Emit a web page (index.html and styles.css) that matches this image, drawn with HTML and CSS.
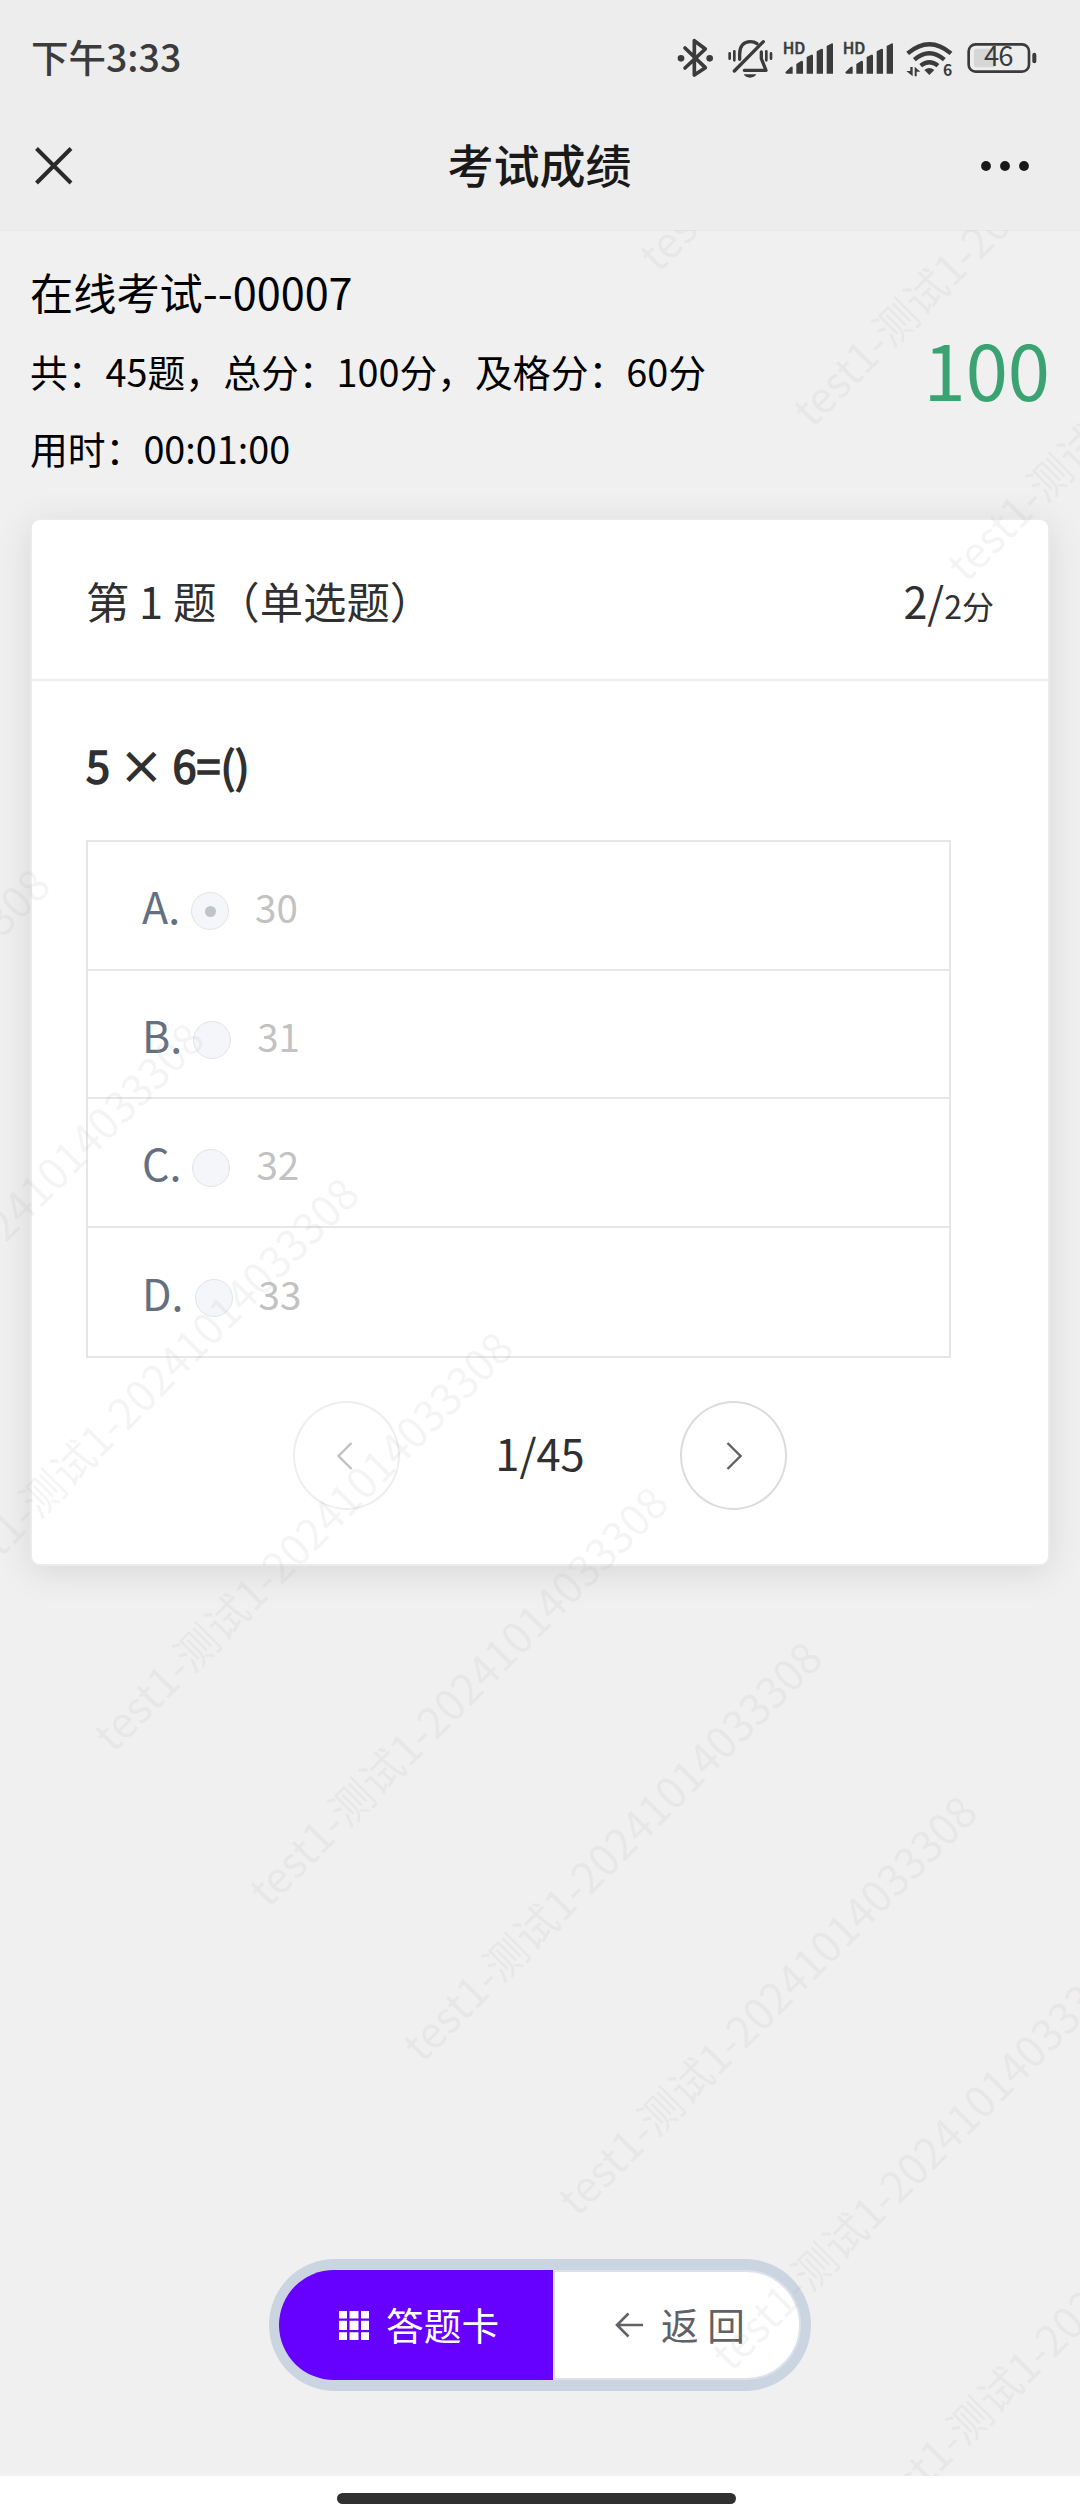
FILE: index.html
```html
<!DOCTYPE html>
<html lang="zh-CN">
<head>
<meta charset="utf-8">
<title>考试成绩</title>
<link rel="stylesheet" href="styles.css">
</head>
<body>
<div class="screen">
  <header class="top">
    <div class="status">
      <span class="time">下午3:33</span>
      <div class="status-icons">
        <svg width="40" height="45" viewBox="50 45 120 135" fill="none" stroke="#3b3b3b" stroke-width="11" stroke-linejoin="round" stroke-linecap="round">
          <path d="M74 84 L135 143 L102 165 V62 L135 87 L74 144"/>
          <circle cx="62" cy="115" r="10" fill="#3b3b3b" stroke="none"/><circle cx="148" cy="115" r="10" fill="#3b3b3b" stroke="none"/>
        </svg>
        <svg width="46.67" height="45" viewBox="200 45 140 135" fill="none" stroke="#3b3b3b" stroke-width="10" stroke-linecap="round" stroke-linejoin="round">
          <path d="M222 153 L309 65"/>
          <path d="M238 118 V102 C238 78 250 65 270 65 C278 65 285 67 290 71"/>
          <path d="M303 96 V116 L317 151 H252"/>
          <path d="M250 163 H288 Q282 173 269 173 Q256 173 250 163Z" fill="#3b3b3b" stroke="none"/>
          <path stroke-width="8" d="M208 100V116 M222 94V121 M318 94V121 M332 100V116"/>
        </svg>
        <svg class="signal" width="50" height="45" viewBox="371 45 150 135">
          <text x="370" y="101">HD</text>
          <path d="M378 157 L394 141 Q400 137 400 143 V161 H382 Q378 161 378 157Z M411 132 L425 123 Q431 120 431 127 V161 H411Z M442 111 L456 104 Q461 102 461 108 V161 H442Z M472 94 L485 87 Q491 84 491 90 V161 H472Z M502 78 L515 71 Q521 68 521 74 V161 H502Z"/>
        </svg>
        <svg class="signal" width="50" height="45" viewBox="371 45 150 135">
          <text x="370" y="101">HD</text>
          <path d="M378 157 L394 141 Q400 137 400 143 V161 H382 Q378 161 378 157Z M411 132 L425 123 Q431 120 431 127 V161 H411Z M442 111 L456 104 Q461 102 461 108 V161 H442Z M472 94 L485 87 Q491 84 491 90 V161 H472Z M502 78 L515 71 Q521 68 521 74 V161 H502Z"/>
        </svg>
        <svg class="wifi" width="53" height="45" viewBox="731 45 159 135">
          <path fill="none" stroke="#3b3b3b" stroke-width="13" d="M745 100 Q810 45 875 100 M765 119 Q810 80 855 119 M784 137 Q810 116 836 137"/>
          <path d="M795 150 Q810 138 825 150 L810 165Z"/>
          <path d="M753 141 h7 v28 L741 153 h12Z M766 169 h6 V155 h11 L766 140Z"/>
          <text x="851" y="168">6</text>
        </svg>
        <svg class="battery" width="71.67" height="45" viewBox="920 45 215 135">
          <rect x="928" y="73" width="181" height="82" rx="21" fill="none" stroke="#3b3b3b" stroke-width="8"/>
          <rect x="944" y="86" width="64" height="56" rx="8" fill="#d6d6d6"/>
          <rect x="1119" y="98" width="12" height="32" rx="6" fill="#3b3b3b"/>
          <text x="974" y="138">46</text>
        </svg>
      </div>
    </div>
    <nav class="nav">
      <svg class="close" width="38" height="38" viewBox="0 0 38 38"><path d="M1.5 1.5 L36 36 M36 1.5 L1.5 36"/></svg>
      <h1 class="nav-title">考试成绩</h1>
      <svg class="more" width="50" height="12" viewBox="0 0 50 12"><circle cx="6" cy="6" r="4.9"/><circle cx="25" cy="6" r="4.9"/><circle cx="44" cy="6" r="4.9"/></svg>
    </nav>
  </header>

  <main class="content">
    <section class="summary">
      <div class="facts">
        <div class="exam-name">在线考试--00007</div>
        <div class="fact">共：45题，总分：100分，及格分：60分</div>
        <div class="fact">用时：00:01:00</div>
      </div>
      <div class="score">100</div>
    </section>

    <section class="card">
      <div class="card-head">
        <span>第 1 题（单选题）</span>
        <span class="points">2/<small>2分</small></span>
      </div>
      <div class="card-body">
        <div class="question">5 × 6=()</div>
        <ul class="options">
          <li><span class="letter">A.</span><i class="radio checked"></i><span class="value">30</span></li>
          <li><span class="letter">B.</span><i class="radio"></i><span class="value">31</span></li>
          <li><span class="letter">C.</span><i class="radio"></i><span class="value">32</span></li>
          <li><span class="letter">D.</span><i class="radio"></i><span class="value">33</span></li>
        </ul>
        <div class="pager">
          <button class="round disabled" aria-label="上一题"><svg width="18" height="30" viewBox="0 0 18 30"><path d="M15.5 2 L2.5 15 L15.5 28"/></svg></button>
          <span class="page">1/45</span>
          <button class="round" aria-label="下一题"><svg width="18" height="30" viewBox="0 0 18 30"><path d="M2.5 2 L15.5 15 L2.5 28"/></svg></button>
        </div>
      </div>
    </section>

    <div class="actions">
      <button class="btn primary">
        <svg width="30" height="29" viewBox="0 0 30 29"><path d="M0 0h8v7.5H0z M10.5 0h9v7.5h-9z M22 0h8v7.5h-8z M0 9.8h8v9.2H0z M10.5 9.8h9v9.2h-9z M22 9.8h8v9.2h-8z M0 21.3h8V29H0z M10.5 21.3h9V29h-9z M22 21.3h8V29h-8z"/></svg>
        <span>答题卡</span>
      </button>
      <button class="btn back">
        <svg width="29" height="26" viewBox="0 0 29 26"><path d="M28 13 H2 M13.5 1.5 L2 13 L13.5 24.5"/></svg>
        <span>返 回</span>
      </button>
    </div>

    <svg class="watermark" width="1080" height="2246" viewBox="0 230 1080 2246" aria-hidden="true">
      <text transform="translate(658 274) rotate(-45)">test1-测试1-20241014033308</text>
      <text transform="translate(812 429) rotate(-45)">test1-测试1-20241014033308</text>
      <text transform="translate(966 584) rotate(-45)">test1-测试1-20241014033308</text>
      <text transform="translate(-350 1291) rotate(-45)">test1-测试1-20241014033308</text>
      <text transform="translate(-196 1445) rotate(-45)">test1-测试1-20241014033308</text>
      <text transform="translate(-41 1600) rotate(-45)">test1-测试1-20241014033308</text>
      <text transform="translate(113 1754) rotate(-45)">test1-测试1-20241014033308</text>
      <text transform="translate(268 1909) rotate(-45)">test1-测试1-20241014033308</text>
      <text transform="translate(422 2064) rotate(-45)">test1-测试1-20241014033308</text>
      <text transform="translate(577 2218) rotate(-45)">test1-测试1-20241014033308</text>
      <text transform="translate(731 2373) rotate(-45)">test1-测试1-20241014033308</text>
      <text transform="translate(886 2527) rotate(-45)">test1-测试1-20241014033308</text>
    </svg>
  </main>
  <footer class="home"><div class="home-bar"></div></footer>
</div>
</body>
</html>
```

FILE: styles.css
```css
* { box-sizing: border-box; }
body {
  margin: 0;
  font-family: "Noto Sans CJK SC", "Noto Sans", sans-serif;
  color: #303030;
  background: #fff;
}
button { font: inherit; padding: 0; margin: 0; cursor: pointer; }
svg { display: block; flex: none; }
.screen {
  width: 1080px;
  height: 2520px;
  display: flex;
  flex-direction: column;
  overflow: hidden;
}

/* Status bar and navigation */
.top { height: 230px; background: #ededed; }
.status {
  height: 101px;
  padding: 14px 42px 0 31px;
  display: flex;
  align-items: center;
  justify-content: space-between;
}
.time { font-size: 37.5px; font-weight: 500; color: #3b3b3b; line-height: 1; padding-bottom: 3px; }
.status-icons { display: flex; gap: 10px; }
.signal, .wifi { fill: #3b3b3b; }
.signal text { font: 500 47px "Noto Sans CJK SC", sans-serif; stroke: #3b3b3b; stroke-width: 1.5; }
.wifi text { font: 700 47px "Noto Sans CJK SC", sans-serif; }
.battery text { font: 400 82px "Noto Sans CJK SC", sans-serif; fill: #3b3b3b; letter-spacing: -3px; }
.nav {
  height: 129px;
  padding: 0 50px 0 35px;
  display: grid;
  grid-template-columns: 38px 1fr 50px;
  align-items: center;
}
.close { stroke: #2a2a2a; stroke-width: 4; fill: none; }
.nav-title {
  margin: 0;
  padding: 0 0 6px 26px;
  text-align: center;
  font-size: 46px;
  font-weight: 500;
  color: #191919;
  line-height: 1;
}
.more { fill: #191919; }

.content {
  position: relative;
  height: 2246px;
  border-top: 1px solid #e8e8e8;
  background: #f0f0f0;
}

/* Exam summary */
.summary {
  height: 287px;
  padding: 19px 30px 0;
  display: flex;
  justify-content: space-between;
  color: #000;
}
.exam-name { font-size: 43.2px; line-height: 82px; }
.fact { font-size: 37.8px; line-height: 77px; }
.score { font-size: 76px; line-height: 76px; margin-top: 80px; color: #3ba272; }

/* Question card */
.card {
  height: 1048px;
  margin: 0 30px;
  border: 2px solid #ebebeb;
  border-radius: 10px;
  background: #fff;
  box-shadow: 0 6px 36px rgba(0, 0, 0, .1);
}
.card-head {
  height: 161px;
  padding: 0 54px 0 54px;
  display: flex;
  align-items: center;
  justify-content: space-between;
  font-size: 43.4px;
  border-bottom: 2px solid #ededed;
}
.points { font-size: 43px; }
.points small { font-size: 32px; }
.card-body { padding: 53px 54px 0; }
.question {
  font-size: 43.2px;
  line-height: 60px;
  -webkit-text-stroke: 1.6px #303030;
}
.options {
  list-style: none;
  width: 865px;
  height: 518px;
  margin: 46px 0 0;
  padding: 0;
  display: grid;
  grid-template-rows: repeat(4, 1fr);
  border: 2px solid #e6e6e6;
}
.options li { display: flex; align-items: center; padding-left: 54px; }
.options li:not(:last-child) { border-bottom: 2px solid #e6e6e6; }
.letter { font-size: 43px; color: #64707f; }
.radio {
  width: 38px;
  height: 38px;
  margin: 12px 26px 0 11px;
  display: grid;
  place-items: center;
  border: 1.5px solid #e4e4e8;
  border-radius: 50%;
  background: #f5f6fa;
}
.radio.checked::after {
  content: "";
  width: 11px;
  height: 11px;
  border-radius: 50%;
  background: #c0c3ca;
}
.value { font-size: 38.5px; color: #c2c2c2; padding-top: 2px; }
.pager {
  width: 495px;
  margin: 43px auto 0;
  display: flex;
  align-items: center;
  justify-content: space-between;
}
.round {
  width: 107px;
  height: 109px;
  display: grid;
  place-items: center;
  border: 2px solid #dcdcdc;
  border-radius: 50%;
  background: none;
}
.round svg { fill: none; stroke: #606266; stroke-width: 2.4; }
.round.disabled { border-color: #eeeeee; }
.round.disabled svg { stroke: #c0c0c0; margin-right: 3px; }
.page { font-size: 43.5px; line-height: 60px; padding-bottom: 5px; }

/* Floating action pill */
.actions {
  position: absolute;
  left: 269px;
  top: 2028px;
  width: 542px;
  height: 132px;
  display: flex;
  border: 11px solid #cbd5e1;
  border-width: 11px 10px;
  border-radius: 66px;
  background: #cbd5e1;
}
.btn {
  display: flex;
  align-items: center;
  border: 0;
  font-size: 37.7px;
}
.btn span { padding-bottom: 3px; }
.btn.primary {
  width: 274px;
  padding-left: 60px;
  gap: 17px;
  color: #fff;
  fill: #fff;
  background: #6600ff;
  border-radius: 55px 0 0 55px;
}
.btn.back {
  flex: 1;
  padding-left: 60px;
  gap: 17px;
  color: #606266;
  background: #fff;
  border: 2px solid #dde2ea;
  border-radius: 0 55px 55px 0;
}
.btn.back svg { fill: none; stroke: #606266; stroke-width: 2.6; }

.watermark { position: absolute; left: 0; top: -1px; pointer-events: none; }
.watermark text {
  font: 42.8px "Noto Sans CJK SC", sans-serif;
  fill: rgba(170, 170, 170, .13);
}

.home { height: 44px; padding: 17px 0 0 337px; background: #fff; }
.home-bar { width: 399px; height: 11px; border-radius: 6px; background: #303030; }
```
